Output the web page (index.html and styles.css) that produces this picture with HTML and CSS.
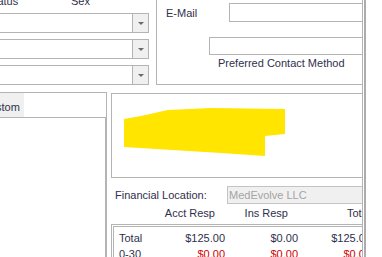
FILE: index.html
```html
<!DOCTYPE html>
<html lang="en">
<head>
    <meta charset="UTF-8">
    <title>Account</title>
    <link rel="stylesheet" href="styles.css">
</head>
<body>
    <div class="window">
        <div class="main">
            <div class="top">
                <div class="fields">
                    <div class="field-labels">
                        <span class="lbl-status">Status</span>
                        <span class="lbl-sex">Sex</span>
                    </div>
                    <div class="combo"><span class="combo-btn"></span></div>
                    <div class="combo"><span class="combo-btn"></span></div>
                    <div class="combo"><span class="combo-btn"></span></div>
                </div>
                <div class="contact">
                    <div class="email-row">
                        <span class="email-label">E-Mail</span>
                        <span class="textbox email-box"></span>
                    </div>
                    <div class="textbox method-box"></div>
                    <div class="method-label">Preferred Contact Method</div>
                </div>
            </div>
            <div class="bottom">
                <div class="tabs">
                    <div class="tab-strip"><span class="tab">Custom</span></div>
                    <div class="tab-page"></div>
                </div>
                <div class="account">
                    <div class="photo">
                        <svg width="249" height="83" viewBox="0 0 249 83">
                            <polygon fill="#ffe500" points="12,25 29,22 56,16 99,14 173,15 173,40 153,42 153,62 109,59 12,53"/>
                        </svg>
                    </div>
                    <div class="fin-row">
                        <span class="fin-label">Financial Location:</span>
                        <span class="fin-box">MedEvolve LLC</span>
                    </div>
                    <div class="heads">
                        <span></span>
                        <span class="head">Acct Resp</span>
                        <span class="head">Ins Resp</span>
                        <span class="head head-total">Total</span>
                    </div>
                    <div class="ledger">
                        <span>Total</span>
                        <span class="val">$125.00</span>
                        <span class="val">$0.00</span>
                        <span class="val">$125.00</span>
                        <span>0-30</span>
                        <span class="val red">$0.00</span>
                        <span class="val red">$0.00</span>
                        <span class="val red">$0.00</span>
                    </div>
                </div>
            </div>
        </div>
        <div class="splitter"></div>
    </div>
</body>
</html>
```

FILE: styles.css
```css
* {
    margin: 0;
    padding: 0;
    box-sizing: border-box;
}
body {
    width: 382px;
    height: 257px;
    overflow: hidden;
    background: #ffffff;
    font: 11px "Liberation Sans", Arial, sans-serif;
    color: #30304c;
}
.window {
    display: flex;
    height: 257px;
}
.main {
    width: 363px;
    border-right: 1px solid #b4b4b4;
    display: flex;
    flex-direction: column;
    overflow: hidden;
}
.splitter {
    width: 2px;
    margin-left: 1px;
    background: #acacac;
}

/* top part */
.top {
    display: flex;
    height: 85px;
    flex: none;
}
.fields {
    width: 156px;
    flex: none;
    display: flex;
    flex-direction: column;
}
.field-labels {
    display: flex;
    margin-top: -5px;
    height: 13px;
    line-height: 13px;
}
.lbl-status {
    margin-left: -13px;
    width: 84px;
}
.combo {
    margin-left: -10px;
    width: 159px;
    height: 20px;
    border: 1px solid #b4b4b4;
    display: flex;
    justify-content: flex-end;
    margin-top: 6px;
}
.field-labels + .combo {
    margin-top: 5px;
}
.combo-btn {
    width: 16px;
    border-left: 1px solid #b4b4b4;
    background: #f0f0f0;
    display: flex;
    align-items: center;
    justify-content: center;
}
.combo-btn::after {
    content: "";
    border-left: 3px solid transparent;
    border-right: 3px solid transparent;
    border-top: 3px solid #6a6a6a;
}
.contact {
    flex: 1;
    min-width: 0;
    border-left: 1px solid #b4b4b4;
    border-bottom: 1px solid #b4b4b4;
    padding-left: 9px;
    overflow: hidden;
}
.email-row {
    display: flex;
    align-items: center;
    margin-top: 3px;
    height: 19px;
}
.email-label {
    width: 63px;
    flex: none;
}
.textbox {
    display: block;
    border: 1px solid #b4b4b4;
    background: #ffffff;
    width: 200px;
    flex: none;
}
.email-box {
    height: 19px;
}
.method-box {
    height: 18px;
    margin-left: 43px;
    margin-top: 15px;
}
.method-label {
    margin-left: 52px;
    margin-top: 2px;
    line-height: 13px;
    white-space: nowrap;
}

/* bottom part */
.bottom {
    display: flex;
    flex: 1;
}
.tabs {
    width: 107px;
    flex: none;
    margin-top: 7px;
    border-top: 1px solid #b4b4b4;
    border-right: 1px solid #b4b4b4;
    display: flex;
    flex-direction: column;
}
.tab-strip {
    height: 24px;
    display: flex;
    flex: none;
}
.tab {
    background: #f0f0f0;
    margin-left: -20px;
    padding: 8px 4px 0 2px;
    line-height: 13px;
}
.tab-page {
    flex: 1;
    border-top: 1px solid #b4b4b4;
    border-right: 1px solid #b4b4b4;
}
.account {
    flex: 1;
    min-width: 0;
    padding: 8px 0 0 4px;
    display: flex;
    flex-direction: column;
    overflow: hidden;
}
.photo {
    height: 85px;
    flex: none;
    border: 1px solid #b4b4b4;
    border-right: none;
}
.photo svg {
    display: block;
}
.fin-row {
    display: flex;
    align-items: center;
    margin-top: 8px;
    height: 18px;
    flex: none;
}
.fin-label {
    width: 116px;
    flex: none;
    padding-left: 4px;
}
.fin-box {
    width: 160px;
    flex: none;
    height: 18px;
    border: 1px solid #c4c4c4;
    background: #f0f0f0;
    color: #a4a4a4;
    padding-left: 1px;
    line-height: 16px;
}
.heads, .ledger {
    display: grid;
    grid-template-columns: 33px 73px 73px 73px;
    flex: none;
    white-space: nowrap;
}
.heads {
    margin-top: 1px;
    height: 16px;
    line-height: 16px;
    padding-left: 8px;
}
.head {
    text-align: right;
    padding-right: 10px;
}
.head-total {
    text-align: left;
    padding: 0 0 0 49px;
}
.ledger {
    width: 300px;
    height: 60px;
    margin-top: 3px;
    border: 3px double #b4b4b4;
    padding: 3px 0 0 5px;
    grid-auto-rows: 16px;
    line-height: 16px;
    align-content: start;
}
.val {
    text-align: right;
}
.red {
    color: #d00000;
}
```
